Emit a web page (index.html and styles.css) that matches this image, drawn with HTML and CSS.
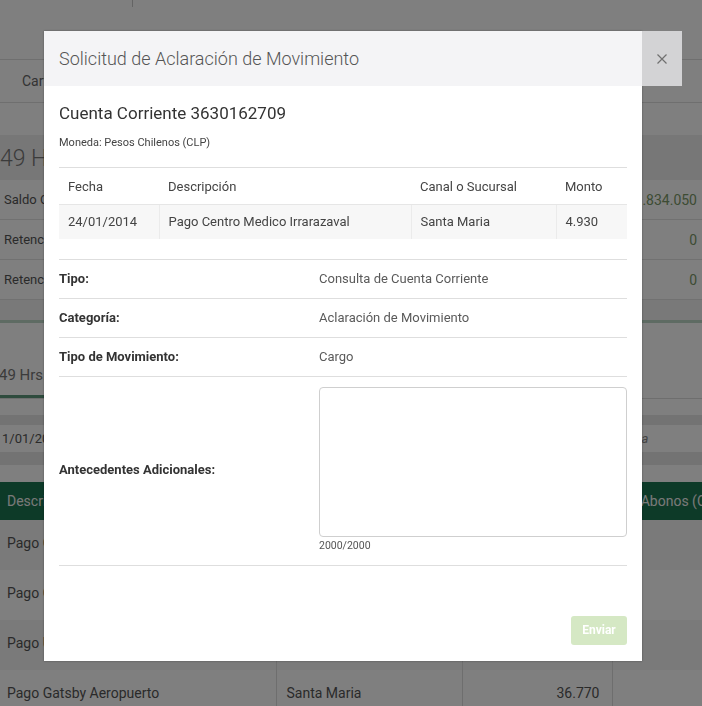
FILE: index.html
```html
<!DOCTYPE html>
<html lang="es">
<head>
<meta charset="utf-8">
<title>Solicitud de Aclaración de Movimiento</title>
<link rel="stylesheet" href="styles.css">
</head>
<body>
<div class="page">
  <header class="topnav"><div class="brand"></div></header>
  <nav class="tabs"><span class="tab">Cartola</span></nav>
  <div class="spacer"></div>
  <section class="balances">
    <h2 class="bal-title">49 Hrs.</h2>
    <div class="bal-row"><span>Saldo Contable</span><span class="amt">1.834.050</span></div>
    <div class="bal-row"><span>Retenciones 24 Hrs.</span><span class="amt">0</span></div>
    <div class="bal-row"><span>Retenciones 48 Hrs.</span><span class="amt">0</span></div>
    <div class="bal-foot"></div>
  </section>
  <div class="subtabs"><span class="subtab">49 Hrs.</span></div>
  <div class="filters">
    <div class="input from">1/01/2014</div>
    <div class="input to">Hasta</div>
  </div>
  <table class="movs">
    <colgroup><col class="m1"><col class="m2"><col class="m3"><col class="m4"></colgroup>
    <thead>
      <tr><th>Descripción</th><th>Canal o Sucursal</th><th class="num">Cargos (CLP)</th><th class="num">Abonos (CLP)</th></tr>
    </thead>
    <tbody>
      <tr><td>Pago Clinica Alemana</td><td>Santa Maria</td><td class="num">12.400</td><td class="num"></td></tr>
      <tr><td>Pago Colegio San Ignacio</td><td>Santa Maria</td><td class="num">85.000</td><td class="num"></td></tr>
      <tr><td>Pago Unimarc</td><td>Santa Maria</td><td class="num">21.340</td><td class="num"></td></tr>
      <tr><td>Pago Gatsby Aeropuerto</td><td>Santa Maria</td><td class="num">36.770</td><td class="num"></td></tr>
    </tbody>
  </table>
</div>

<div class="backdrop"></div>

<div class="modal" role="dialog">
  <div class="modal-header">
    <h4 class="modal-title">Solicitud de Aclaración de Movimiento</h4>
    <button class="close" aria-label="Cerrar"><svg width="10" height="10" viewBox="0 0 10 10"><path d="M0.5 0.5L9.5 9.5M9.5 0.5L0.5 9.5" stroke="#707070" stroke-width="1.2" fill="none"/></svg></button>
  </div>
  <div class="modal-body">
    <h3 class="account">Cuenta Corriente 3630162709</h3>
    <p class="currency">Moneda: Pesos Chilenos (CLP)</p>
    <table class="detail">
      <colgroup><col class="d1"><col class="d2"><col class="d3"><col class="d4"></colgroup>
      <thead>
        <tr><th>Fecha</th><th>Descripción</th><th>Canal o Sucursal</th><th>Monto</th></tr>
      </thead>
      <tbody>
        <tr><td>24/01/2014</td><td>Pago Centro Medico Irrarazaval</td><td>Santa Maria</td><td>4.930</td></tr>
      </tbody>
    </table>
    <dl class="fields">
      <div class="field"><dt>Tipo:</dt><dd>Consulta de Cuenta Corriente</dd></div>
      <div class="field"><dt>Categoría:</dt><dd>Aclaración de Movimiento</dd></div>
      <div class="field"><dt>Tipo de Movimiento:</dt><dd>Cargo</dd></div>
      <div class="field field-text">
        <dt>Antecedentes Adicionales:</dt>
        <dd><textarea class="notes"></textarea><div class="counter">2000/2000</div></dd>
      </div>
    </dl>
  </div>
  <div class="modal-footer"><button class="btn-send" disabled>Enviar</button></div>
</div>
</body>
</html>
```

FILE: styles.css
```css
* { box-sizing: border-box; }
html, body { margin: 0; height: 100%; }
body {
  font-family: Roboto, "Liberation Sans", sans-serif;
  background: #fff;
  color: #555;
  overflow: hidden;
  position: relative;
}

/* ---------- background page ---------- */
.page { width: 702px; }
.topnav { height: 60px; border-bottom: 1px solid #dedede; }
.brand { width: 133px; height: 7px; border-right: 1px solid #c8c8c8; }
.tabs {
  height: 43px; border-bottom: 1px solid #dedede;
  display: flex; align-items: center; padding-left: 22px;
  font-size: 14px; color: #666;
}
.spacer { height: 32px; }
.bal-title {
  margin: 0; height: 45px; line-height: 48px; background: #efefef;
  font-size: 23px; font-weight: 300; color: #777; padding-left: 0;
}
.bal-row {
  height: 40px; border-bottom: 1px solid #e2e2e2;
  display: flex; justify-content: space-between; align-items: center;
  padding: 0 5px 0 4px; font-size: 13px; color: #555;
}
.bal-row .amt { font-size: 14px; color: #7a9868; }
.bal-foot { height: 23px; background: #f3f3f3; border-bottom: 3px solid #bcd6c6; }
.subtabs {
  height: 76px; border-bottom: 1px solid #dcdcdc;
  display: flex; align-items: flex-end;
}
.subtab {
  font-size: 15px; line-height: 18px; color: #777;
  padding: 0 20px 11px 0; margin-left: -1px;
  border-bottom: 3px solid #5c977b;
}
.filters {
  margin-top: 16px; background: #e7e7e7; padding: 10px 0 13px;
  display: flex; justify-content: space-between;
}
.input {
  height: 27px; line-height: 27px; background: #fefefe;
  font-size: 13px; color: #555;
}
.input.from { width: 260px; padding-left: 2px; }
.input.to { width: 142px; padding-left: 55px; font-style: italic; color: #888; }
.movs {
  margin-top: 17px; width: 756px; border-collapse: collapse; table-layout: fixed;
}
.movs .m1 { width: 276px; }
.movs .m2 { width: 186px; }
.movs .m3 { width: 150px; }
.movs .m4 { width: 144px; }
.movs th {
  height: 38px; background: #1b7450; color: #f2f2f2;
  font-size: 14px; font-weight: 400; text-align: left; padding: 0 7px;
}
.movs th.num { text-align: center; }
.movs td {
  height: 50px; font-size: 14px; color: #555; padding: 0 8px 4px 7px;
  white-space: nowrap; overflow: hidden;
}
.movs td + td { border-left: 1px solid #dcdcdc; padding-left: 10px; }
.movs td.num { text-align: right; padding-right: 12px; }
.movs tbody tr:nth-child(odd) td { background: #f5f5f5; }

.backdrop { position: fixed; inset: 0; background: rgba(0, 0, 0, 0.5); }

/* ---------- modal ---------- */
.modal {
  position: absolute; left: 44px; top: 31px; width: 598px;
  background: #fff; box-shadow: 0 0 2px rgba(0, 0, 0, 0.35);
}
.modal-header {
  height: 55px; background: #f4f4f6; padding: 0 15px;
  display: flex; align-items: center; position: relative;
}
.modal-title { margin: 0; font-size: 18px; font-weight: 300; color: #555; }
.close {
  position: absolute; left: 100%; top: 0; width: 40px; height: 55px;
  border: 0; padding: 0; background: #d3d3d5;
  display: flex; align-items: center; justify-content: center;
}
.modal-body { padding: 15px 15px 0; }
.account { margin: 0; font-size: 17px; line-height: 24px; font-weight: 400; color: #333; }
.currency { margin: 11px 0 0; font-size: 11px; line-height: 14px; color: #444; }
.detail {
  margin-top: 17px; width: 100%; border-collapse: collapse; table-layout: fixed;
  border-top: 1px solid #dedede;
}
.detail .d1 { width: 100px; }
.detail .d2 { width: 252px; }
.detail .d3 { width: 145px; }
.detail .d4 { width: 71px; }
.detail th {
  height: 37px; text-align: left; font-size: 13px; font-weight: 400; color: #444;
  padding: 0 9px; border-bottom: 1px solid #e6e6e6;
}
.detail td {
  height: 34px; font-size: 13px; color: #444; padding: 0 9px; background: #f7f7f7;
  white-space: nowrap;
}
.detail td + td { border-left: 1px solid #ebebeb; }
.fields { margin: 20px 0 0; padding: 0; }
.field {
  display: grid; grid-template-columns: 260px 1fr; align-items: center;
  min-height: 39px; border-top: 1px solid #dedede;
}
.field dt { font-size: 13px; font-weight: 700; color: #333; }
.field dd { margin: 0; font-size: 13px; color: #5a5a5a; }
.field-text { padding: 10px 0 12px; border-bottom: 1px solid #dedede; }
.notes {
  display: block; width: 308px; height: 150px; margin: 0; resize: none;
  border: 1px solid #cfcfcf; border-radius: 4px; background: #fff;
}
.counter { margin-top: 2px; font-size: 10.5px; line-height: 14px; color: #555; }
.modal-footer { padding: 50px 15px 16px; display: flex; justify-content: flex-end; }
.btn-send {
  width: 56px; height: 29px; border: 0; border-radius: 3px;
  background: #d5e8c4; color: #fff; font-family: inherit;
  font-size: 12px; font-weight: 700; padding: 0;
}
```
